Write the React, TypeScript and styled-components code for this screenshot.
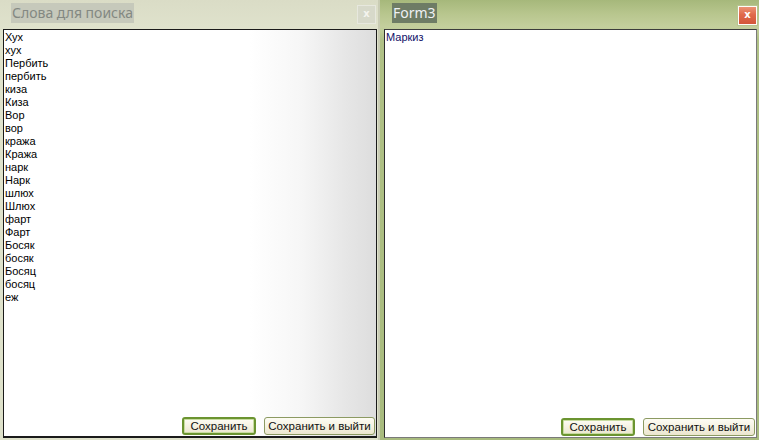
import React from "react";
import styled, { createGlobalStyle, css } from "styled-components";

const Global = createGlobalStyle`
  html, body { margin: 0; padding: 0; overflow: hidden; background: #dfe2cc; }
  #root { width: 759px; height: 440px; }
`;

const Desktop = styled.div`
  display: flex;
  width: 759px;
  height: 440px;
`;

const Window = styled.div<{ $active?: boolean; $w: number }>`
  width: ${(p) => p.$w}px;
  height: 440px;
  display: flex;
  flex-direction: column;
  box-sizing: border-box;
  ${(p) =>
    p.$active
      ? css`
          background: linear-gradient(#a6b87b 0px, #b8c68e 14px, #c4cf9d 27px, #b0c186 40px, #a8bb7e 100%);
          padding: 0 2px 2px 4px;
        `
      : css`
          background: linear-gradient(#dadcc6 0px, #dfe2cc 28px, #dee1ca 100%);
          padding: 0 3px 2px 3px;
          box-shadow: inset -2px 0 0 #c9ccb4;
        `}
`;

const TitleBar = styled.div<{ $active?: boolean }>`
  height: 29px;
  display: flex;
  align-items: flex-start;
  padding: 0 ${(p) => (p.$active ? 0 : 1)}px 0 ${(p) => (p.$active ? 8 : 8)}px;
  flex: none;
`;

const Title = styled.div<{ $active?: boolean }>`
  margin-top: 3px;
  height: 20px;
  line-height: 20px;
  padding: 0 1px;
  font-family: "Noto Sans", "Open Sans", sans-serif;
  font-size: 14px;
  color: ${(p) => (p.$active ? "#eef1f4" : "#838882")};
  background: ${(p) => (p.$active ? "#6e7c65" : "#c6c9bb")};
`;

const Close = styled.div<{ $active?: boolean }>`
  margin-left: auto;
  margin-top: ${(p) => (p.$active ? 6 : 5)}px;
  width: 19px;
  height: 19px;
  box-sizing: border-box;
  display: flex;
  align-items: center;
  justify-content: center;
  font-family: "DejaVu Sans", sans-serif;
  font-weight: bold;
  font-size: 10px;
  line-height: 1;
  padding-bottom: 2px;
  ${(p) =>
    p.$active
      ? css`
          border: 1px solid #fdfdf8;
          background: linear-gradient(#eb9275 0%, #e06a4b 45%, #d3563a 100%);
          color: #ffffff;
          box-shadow: 0 0 0 1px #b7c58f;
        `
      : css`
          border: 1px solid #e7e8de;
          background: #d7d9ca;
          color: #f4f4ee;
        `}
`;

const Editor = styled.div<{ $active?: boolean }>`
  flex: 1;
  position: relative;
  box-sizing: border-box;
  ${(p) =>
    p.$active
      ? css`
          border: 1px solid #7a7a7a;
          border-left-color: #2e2e2e;
          border-top-color: #3c3c3c;
          background: #ffffff;
          color: #12126a;
        `
      : css`
          border: 1px solid #1a1a1a;
          border-bottom-width: 2px;
          background: linear-gradient(to right, #ffffff 0%, #ffffff 66%, #f6f6f6 80%, #e6e6e6 92%, #dddddd 100%);
          color: #000000;
        `}
`;

const Lines = styled.div`
  padding: 1px 0 0 1px;
  font-family: "Liberation Sans", Arial, sans-serif;
  font-size: 11px;
  line-height: 13px;
`;

const Line = styled.div`
  white-space: pre;
`;

const ButtonRow = styled.div`
  position: absolute;
  right: 1px;
  bottom: 1px;
  display: flex;
  gap: 8px;
`;

const Button = styled.div<{ $default?: boolean; $w: number }>`
  width: ${(p) => p.$w}px;
  height: 18px;
  box-sizing: border-box;
  border-radius: 3px;
  display: flex;
  align-items: center;
  justify-content: center;
  font-family: "Liberation Sans", Arial, sans-serif;
  font-size: 11.5px;
  color: #111;
  white-space: nowrap;
  background: linear-gradient(#fdfcf4 0%, #f5f2e2 50%, #ebe6cf 100%);
  ${(p) =>
    p.$default
      ? css`
          border: 2px solid #6b9430;
          box-shadow: inset 0 0 0 1px #c8dca0;
        `
      : css`
          border: 1px solid #8c9a62;
        `}
`;

const leftWords = [
  "Хух", "хух", "Пербить", "пербить", "киза", "Киза", "Вор", "вор", "кража", "Кража",
  "нарк", "Нарк", "шлюх", "Шлюх", "фарт", "Фарт", "Босяк", "босяк", "Босяц", "босяц", "еж",
];

function Panel(props: { active?: boolean; width: number; title: string; lines: string[]; w1: number; w2: number }) {
  const { active, width, title, lines, w1, w2 } = props;
  return (
    <Window $active={active} $w={width}>
      <TitleBar $active={active}>
        <Title $active={active}>{title}</Title>
        <Close $active={active}>x</Close>
      </TitleBar>
      <Editor $active={active}>
        <Lines>
          {lines.map((l, i) => (
            <Line key={i}>{l}</Line>
          ))}
        </Lines>
        <ButtonRow>
          <Button $default $w={w1}>Сохранить</Button>
          <Button $w={w2}>Сохранить и выйти</Button>
        </ButtonRow>
      </Editor>
    </Window>
  );
}

export default function App() {
  return (
    <>
      <Global />
      <Desktop>
        <Panel width={380} title="Слова для поиска" lines={leftWords} w1={74} w2={111} />
        <Panel active width={379} title="Form3" lines={["Маркиз"]} w1={74} w2={112} />
      </Desktop>
    </>
  );
}
